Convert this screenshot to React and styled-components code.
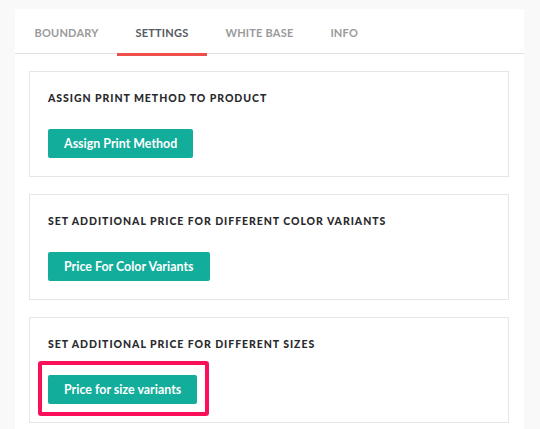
import React from "react";
import styled, { createGlobalStyle } from "styled-components";

const Global = createGlobalStyle`
  html, body { margin: 0; padding: 0; background: #f9f9f9; }
  body { font-family: Lato, "Open Sans", sans-serif; }
`;

const Page = styled.div`
  padding: 9px 16px 0 15px;
  height: 429px;
  box-sizing: border-box;
  overflow: hidden;
`;

const Panel = styled.div`
  background: #fff;
  height: 440px;
`;

const TabBar = styled.div`
  display: flex;
  height: 45px;
  border-bottom: 1px solid #e2e2e2;
  box-sizing: border-box;
  padding-left: 1px;
`;

const Tab = styled.div`
  position: relative;
  display: flex;
  align-items: center;
  padding: 2px 18.5px 0;
  font-size: 11px;
  font-weight: 700;
  letter-spacing: 0.2px;
  color: ${(p) => (p.$active ? "#555a60" : "#9a9a9a")};
  &::after {
    content: "";
    display: ${(p) => (p.$active ? "block" : "none")};
    position: absolute;
    left: 0;
    right: 0;
    bottom: -3px;
    height: 3px;
    background: #ef4f4a;
  }
`;

const Body = styled.div`
  display: flex;
  flex-direction: column;
  gap: 17px;
  padding: 17px 15px 0 14px;
`;

const Card = styled.div`
  position: relative;
  border: 1px solid #e6e6e6;
  padding: 20px 18px 18px;
  display: flex;
  flex-direction: column;
  align-items: flex-start;
  gap: 25px;
  height: 106px;
  box-sizing: border-box;
`;

const Title = styled.div`
  font-size: 10.5px;
  font-weight: 900;
  letter-spacing: 0.95px;
  color: #2a2a2e;
  line-height: 12px;
`;

const Button = styled.button`
  background: #13ad9b;
  color: #fff;
  border: none;
  border-radius: 2px;
  height: 29px;
  padding: 0 16px;
  font-family: Lato, "Open Sans", sans-serif;
  font-size: 12.4px;
  font-weight: 700;
  letter-spacing: 0.02px;
  cursor: pointer;
`;

const Highlight = styled.div`
  position: absolute;
  left: 8px;
  top: 43px;
  width: 171px;
  height: 55px;
  border: 4px solid #fb0f58;
  border-radius: 3px;
  box-sizing: border-box;
  pointer-events: none;
`;

const tabs = ["BOUNDARY", "SETTINGS", "WHITE BASE", "INFO"];

const cards = [
  { title: "ASSIGN PRINT METHOD TO PRODUCT", button: "Assign Print Method" },
  { title: "SET ADDITIONAL PRICE FOR DIFFERENT COLOR VARIANTS", button: "Price For Color Variants" },
  { title: "SET ADDITIONAL PRICE FOR DIFFERENT SIZES", button: "Price for size variants", highlight: true },
];

export default function App() {
  return (
    <>
      <Global />
      <Page>
        <Panel>
          <TabBar>
            {tabs.map((t) => (
              <Tab key={t} $active={t === "SETTINGS"}>{t}</Tab>
            ))}
          </TabBar>
          <Body>
            {cards.map((c) => (
              <Card key={c.title}>
                <Title>{c.title}</Title>
                <Button>{c.button}</Button>
                {c.highlight && <Highlight />}
              </Card>
            ))}
          </Body>
        </Panel>
      </Page>
    </>
  );
}
